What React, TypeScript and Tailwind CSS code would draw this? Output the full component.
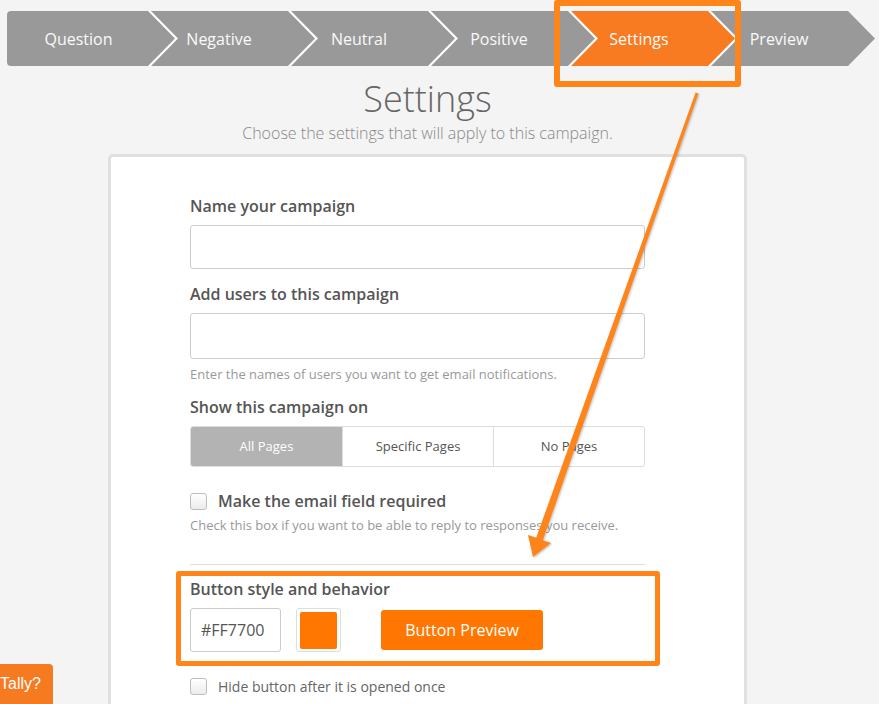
import React from "react";

const steps = ["Question", "Negative", "Neutral", "Positive", "Settings", "Preview"];

const notch = "polygon(3px 0, calc(100% - 27px) 0, 100% 50%, calc(100% - 27px) 100%, 3px 100%, 30px 50%)";
const first = "polygon(0 0, calc(100% - 27px) 0, 100% 50%, calc(100% - 27px) 100%, 0 100%)";

const Checkbox = () => (
  <span className="inline-block w-[17px] h-[17px] shrink-0 rounded-[3px] border border-[#bdbdbd] bg-gradient-to-b from-white to-[#ececec]" />
);

const Label = ({ children }: { children: React.ReactNode }) => (
  <div className="text-[16px] leading-[22px] font-semibold text-[#555]">{children}</div>
);

export default function App() {
  return (
    <div
      className="relative h-[704px] w-[879px] overflow-hidden bg-[#f4f4f4]"
      style={{ fontFamily: '"Open Sans", sans-serif' }}
    >
      {/* step bar */}
      <div className="ml-[7px] mt-[11px] flex h-[55px] w-[841px] rounded-l-[4px] bg-white">
        {steps.map((s, i) => (
          <div
            key={s}
            className={`${i === 0 ? "w-[168px] rounded-l-[4px]" : "w-[167px]"} mr-[-27px] flex h-[55px] shrink-0 items-center justify-center pr-[27px] text-[16px] text-[#fafafa] ${
              s === "Settings" ? "bg-[#f87b21]" : "bg-[#999999]"
            }`}
            style={{ clipPath: i === 0 ? first : notch }}
          >
            <span className="pl-[2px]">{s}</span>
          </div>
        ))}
      </div>

      <div className="ml-[108px] w-[639px]">
        <h1 className="mt-[15px] text-center text-[36px] leading-none font-light text-[#666]">Settings</h1>
        <p className="mt-[8px] text-center text-[16px] leading-none font-light text-[#888]">
          Choose the settings that will apply to this campaign.
        </p>

        {/* card */}
        <div className="mt-[13px] h-[600px] rounded-[5px] border-[3px] border-[#e0e0e0] bg-white">
          <div className="ml-[79px] w-[455px] pt-[38px]">
            <Label>Name your campaign</Label>
            <div className="mt-[8px] h-[44px] rounded-[3px] border border-[#cccccc] bg-white" />

            <div className="mt-[14px]">
              <Label>Add users to this campaign</Label>
            </div>
            <div className="mt-[8px] h-[46px] rounded-[3px] border border-[#cccccc] bg-white" />
            <p className="mt-[6px] text-[13px] leading-[18px] text-[#999]">
              Enter the names of users you want to get email notifications.
            </p>

            <div className="mt-[13px]">
              <Label>Show this campaign on</Label>
            </div>
            <div className="mt-[8px] grid h-[41px] grid-cols-3 overflow-hidden rounded-[3px] border border-[#dddddd] text-[13px]">
              <div className="flex items-center justify-center bg-[#b3b3b3] text-white">All Pages</div>
              <div className="flex items-center justify-center border-l border-[#dddddd] text-[#555]">Specific Pages</div>
              <div className="flex items-center justify-center border-l border-[#dddddd] text-[#555]">No Pages</div>
            </div>

            <div className="mt-[23px] flex h-[22px] items-center gap-[11px]">
              <Checkbox />
              <span className="text-[16px] font-semibold text-[#555]">Make the email field required</span>
            </div>
            <p className="mt-[4px] text-[13px] leading-[18px] text-[#999]">
              Check this box if you want to be able to reply to responses you receive.
            </p>

            <div className="mt-[30px] h-px bg-[#dddddd]" />

            {/* highlighted section */}
            <div className="mt-[6px] -ml-[14px] -mr-[15px] rounded-[3px] border-[5px] border-[#ff841a] pl-[9px] pt-[2px] pb-[9px]">
              <Label>Button style and behavior</Label>
              <div className="mt-[8px] flex items-center">
                <div className="flex h-[44px] w-[91px] items-center rounded-[3px] border border-[#cccccc] pl-[10px] text-[16px] text-[#555]">
                  #FF7700
                </div>
                <div className="ml-[15px] flex h-[44px] w-[45px] items-center justify-center rounded-[3px] border border-[#dddddd]">
                  <div className="h-[37px] w-[37px] rounded-[2px] bg-[#ff7700]" />
                </div>
                <button className="ml-[40px] h-[40px] w-[162px] rounded-[3px] bg-[#ff7700] text-[16px] text-white">
                  Button Preview
                </button>
              </div>
            </div>

            <div className="mt-[10px] flex h-[20px] items-center gap-[11px]">
              <Checkbox />
              <span className="text-[14px] text-[#666]">Hide button after it is opened once</span>
            </div>
          </div>
        </div>
      </div>

      {/* highlight around active step */}
      <div className="absolute left-[554px] top-0 h-[87px] w-[187px] rounded-[3px] border-[6px] border-[#ff841a]" />

      {/* arrow annotation */}
      <svg className="pointer-events-none absolute inset-0" width="879" height="704">
        <polygon
          points="695.6,92.5 698.4,93.5 542.8,540.2 551,543 533,557 528,535 536.2,537.8"
          fill="#ff8419"
          style={{ filter: "drop-shadow(1px 1px 1px rgba(0,0,0,0.25))" }}
        />
      </svg>

      {/* feedback tab */}
      <div className="absolute bottom-0 left-0 flex h-[40px] w-[53px] items-center overflow-hidden rounded-tr-[4px] bg-[#f67a20]">
        <span
          className="text-[16px] text-white"
          style={{ fontFamily: '"Liberation Sans", Arial, sans-serif' }}
        >
          Tally?
        </span>
      </div>
    </div>
  );
}
